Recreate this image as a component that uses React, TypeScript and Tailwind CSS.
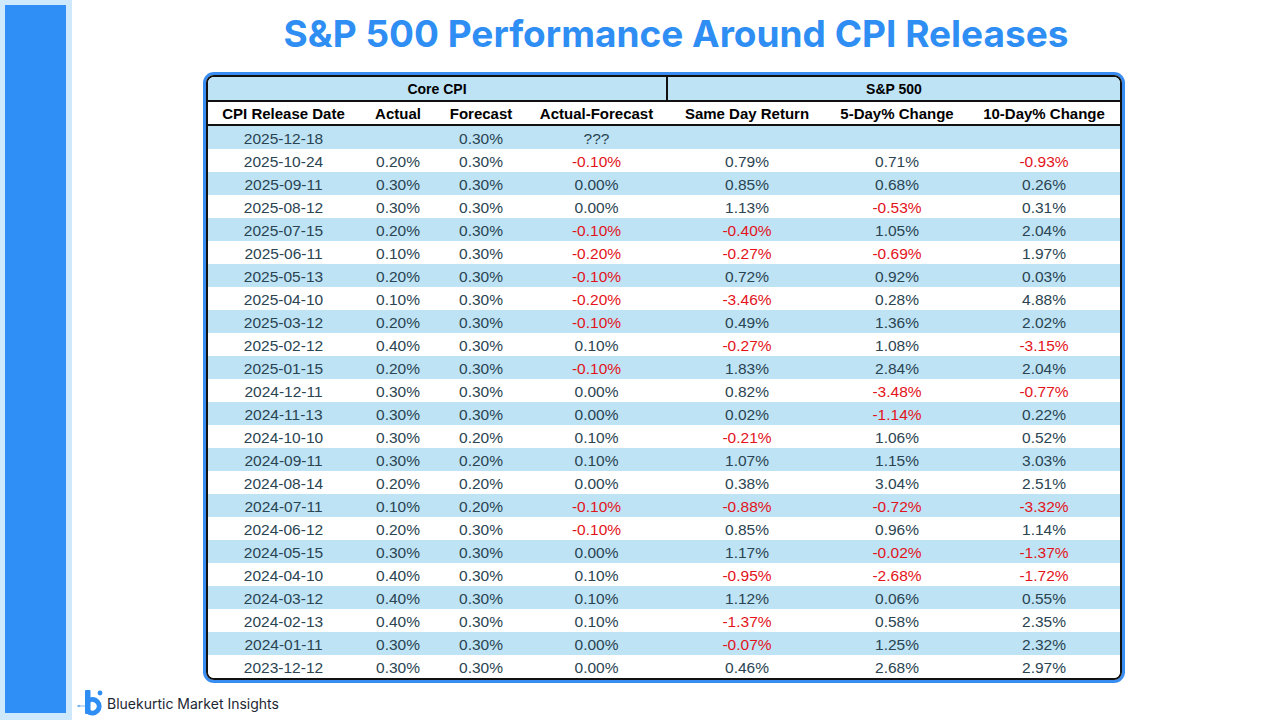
import React from "react";

type Row = {
  date: string;
  actual: string;
  forecast: string;
  diff: string;
  same: string;
  five: string;
  ten: string;
};

const rows: Row[] = [
  { date: "2025-12-18", actual: "", forecast: "0.30%", diff: "???", same: "", five: "", ten: "" },
  { date: "2025-10-24", actual: "0.20%", forecast: "0.30%", diff: "-0.10%", same: "0.79%", five: "0.71%", ten: "-0.93%" },
  { date: "2025-09-11", actual: "0.30%", forecast: "0.30%", diff: "0.00%", same: "0.85%", five: "0.68%", ten: "0.26%" },
  { date: "2025-08-12", actual: "0.30%", forecast: "0.30%", diff: "0.00%", same: "1.13%", five: "-0.53%", ten: "0.31%" },
  { date: "2025-07-15", actual: "0.20%", forecast: "0.30%", diff: "-0.10%", same: "-0.40%", five: "1.05%", ten: "2.04%" },
  { date: "2025-06-11", actual: "0.10%", forecast: "0.30%", diff: "-0.20%", same: "-0.27%", five: "-0.69%", ten: "1.97%" },
  { date: "2025-05-13", actual: "0.20%", forecast: "0.30%", diff: "-0.10%", same: "0.72%", five: "0.92%", ten: "0.03%" },
  { date: "2025-04-10", actual: "0.10%", forecast: "0.30%", diff: "-0.20%", same: "-3.46%", five: "0.28%", ten: "4.88%" },
  { date: "2025-03-12", actual: "0.20%", forecast: "0.30%", diff: "-0.10%", same: "0.49%", five: "1.36%", ten: "2.02%" },
  { date: "2025-02-12", actual: "0.40%", forecast: "0.30%", diff: "0.10%", same: "-0.27%", five: "1.08%", ten: "-3.15%" },
  { date: "2025-01-15", actual: "0.20%", forecast: "0.30%", diff: "-0.10%", same: "1.83%", five: "2.84%", ten: "2.04%" },
  { date: "2024-12-11", actual: "0.30%", forecast: "0.30%", diff: "0.00%", same: "0.82%", five: "-3.48%", ten: "-0.77%" },
  { date: "2024-11-13", actual: "0.30%", forecast: "0.30%", diff: "0.00%", same: "0.02%", five: "-1.14%", ten: "0.22%" },
  { date: "2024-10-10", actual: "0.30%", forecast: "0.20%", diff: "0.10%", same: "-0.21%", five: "1.06%", ten: "0.52%" },
  { date: "2024-09-11", actual: "0.30%", forecast: "0.20%", diff: "0.10%", same: "1.07%", five: "1.15%", ten: "3.03%" },
  { date: "2024-08-14", actual: "0.20%", forecast: "0.20%", diff: "0.00%", same: "0.38%", five: "3.04%", ten: "2.51%" },
  { date: "2024-07-11", actual: "0.10%", forecast: "0.20%", diff: "-0.10%", same: "-0.88%", five: "-0.72%", ten: "-3.32%" },
  { date: "2024-06-12", actual: "0.20%", forecast: "0.30%", diff: "-0.10%", same: "0.85%", five: "0.96%", ten: "1.14%" },
  { date: "2024-05-15", actual: "0.30%", forecast: "0.30%", diff: "0.00%", same: "1.17%", five: "-0.02%", ten: "-1.37%" },
  { date: "2024-04-10", actual: "0.40%", forecast: "0.30%", diff: "0.10%", same: "-0.95%", five: "-2.68%", ten: "-1.72%" },
  { date: "2024-03-12", actual: "0.40%", forecast: "0.30%", diff: "0.10%", same: "1.12%", five: "0.06%", ten: "0.55%" },
  { date: "2024-02-13", actual: "0.40%", forecast: "0.30%", diff: "0.10%", same: "-1.37%", five: "0.58%", ten: "2.35%" },
  { date: "2024-01-11", actual: "0.30%", forecast: "0.30%", diff: "0.00%", same: "-0.07%", five: "1.25%", ten: "2.32%" },
  { date: "2023-12-12", actual: "0.30%", forecast: "0.30%", diff: "0.00%", same: "0.46%", five: "2.68%", ten: "2.97%" },
];

const cols = ["w-[151px]", "w-[78px]", "w-[88px]", "w-[143px]", "w-[158px]", "w-[142px]", "w-[152px]"];

function Cell({ value, w, signed }: { value: string; w: string; signed?: boolean }) {
  const neg = signed && value.startsWith("-");
  return (
    <div className={`${w} text-center ${neg ? "text-[#e3131b]" : ""}`}>{value}</div>
  );
}

function Logo() {
  return (
    <svg width="30" height="28" viewBox="0 0 30 28">
      <line x1="1" y1="17" x2="11" y2="17" stroke="#7db6f0" strokeWidth="1" />
      <circle cx="3" cy="17" r="1.2" fill="#7db6f0" />
      <rect x="9" y="1" width="5.5" height="24" rx="1" fill="#2f8ef3" />
      <path d="M12 12 a6.8 6.8 0 1 1 0 10.5" fill="none" stroke="#2f8ef3" strokeWidth="5" />
      <circle cx="24" cy="4" r="2.4" fill="#2f8ef3" />
    </svg>
  );
}

export default function App() {
  const head = "font-bold text-black";
  return (
    <div className="flex w-[1280px] h-[720px] bg-white overflow-hidden" style={{ fontFamily: "'Liberation Sans', Arial, sans-serif" }}>
      <div className="w-[72px] h-full bg-[#cfe9fc] pl-[5px] pr-[6px] pt-[5px] pb-[7px] shrink-0">
        <div className="w-full h-full bg-[#2f8ff7]" />
      </div>

      <div className="flex-1 flex flex-col">
        <h1
          className="text-center text-[37px] leading-[40px] font-bold text-[#2f8ef3] mt-[14px] h-[58px]"
          style={{ fontFamily: "Inter, 'Noto Sans', sans-serif" }}
        >
          S&amp;P 500 Performance Around CPI Releases
        </h1>

        <div className="ml-[131px] w-[922px] border-[3px] border-[#3a8df0] rounded-[11px]">
          <div className="border-2 border-[#111] rounded-[8px] overflow-hidden text-[15.5px] leading-[23px] text-[#2a4452]">
            <div className="flex h-[25px] pt-[1px] bg-[#bee3f5] border-b-2 border-[#111] text-[14px]">
              <div className={`w-[460px] text-center border-r-2 border-[#111] -mt-[1px] pt-[1px] ${head}`}>Core CPI</div>
              <div className={`flex-1 text-center ${head}`}>S&amp;P 500</div>
            </div>
            <div className={`flex h-[24px] pt-[1px] bg-white border-b-2 border-[#111] leading-[22px] text-[15px] ${head}`}>
              <div className={`${cols[0]} text-center`}>CPI Release Date</div>
              <div className={`${cols[1]} text-center`}>Actual</div>
              <div className={`${cols[2]} text-center`}>Forecast</div>
              <div className={`${cols[3]} text-center`}>Actual-Forecast</div>
              <div className={`${cols[4]} text-center`}>Same Day Return</div>
              <div className={`${cols[5]} text-center`}>5-Day% Change</div>
              <div className={`${cols[6]} text-center`}>10-Day% Change</div>
            </div>
            {rows.map((r, i) => (
              <div key={r.date} className={`flex h-[23px] pt-[2px] leading-[21px] ${i % 2 === 0 ? "bg-[#bee3f5]" : "bg-white"}`}>
                <Cell value={r.date} w={cols[0]} />
                <Cell value={r.actual} w={cols[1]} />
                <Cell value={r.forecast} w={cols[2]} />
                <Cell value={r.diff} w={cols[3]} signed />
                <Cell value={r.same} w={cols[4]} signed />
                <Cell value={r.five} w={cols[5]} signed />
                <Cell value={r.ten} w={cols[6]} signed />
              </div>
            ))}
          </div>
        </div>

        <div className="flex items-center mt-[6px] ml-[4px] gap-[1px]">
          <Logo />
          <span className="text-[14px] text-[#1d2733]" style={{ fontFamily: "Inter, 'Noto Sans', sans-serif" }}>
            Bluekurtic Market Insights
          </span>
        </div>
      </div>
    </div>
  );
}
